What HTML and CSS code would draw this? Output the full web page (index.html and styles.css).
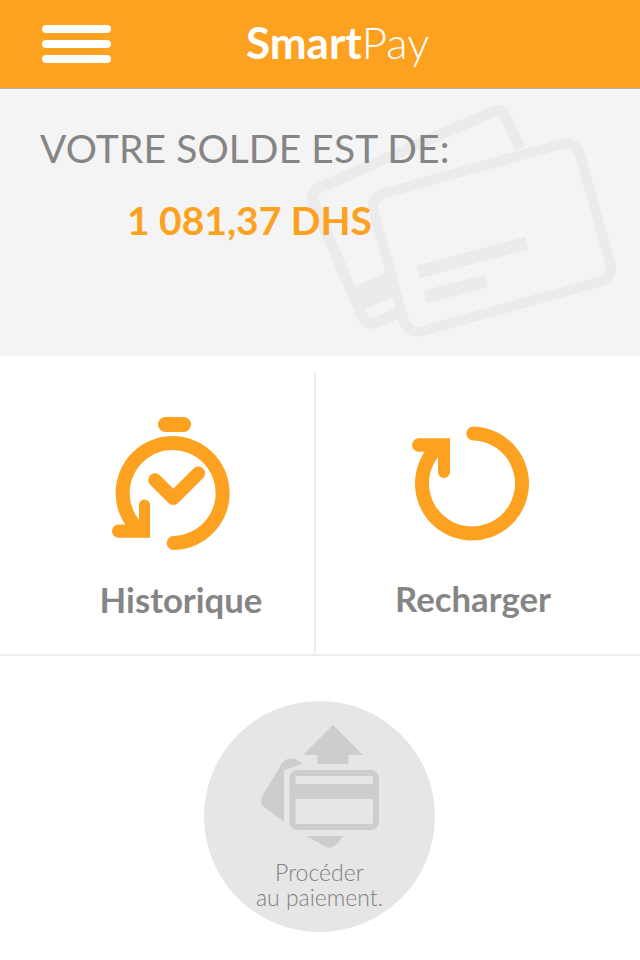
FILE: index.html
```html
<!DOCTYPE html>
<html lang="fr">
<head>
    <meta charset="UTF-8">
    <meta name="viewport" content="width=device-width, initial-scale=1.0">
    <title>SmartPay</title>
    <link rel="stylesheet" href="styles.css">
</head>
<body>
    <header class="topbar">
        <div class="burger"><span></span><span></span><span></span></div>
        <div class="brand"><b>Smart</b>Pay</div>
    </header>

    <section class="balance">
        <svg class="cards" width="330" height="250" viewBox="300 100 330 250">
            <path d="M520 149 L506 117 Q501.5 107.6 492 112 L320 187.5 Q309.5 192 313.5 202 L362 316 Q367 326.5 377.5 322 L400 312" fill="none" stroke="#ebebeb" stroke-width="11"/>
            <path d="M356 300 L400 280" stroke="#ebebeb" stroke-width="25"/>
            <rect x="385" y="166" width="214" height="143" rx="14" fill="#f4f4f4" stroke="#ebebeb" stroke-width="10" transform="rotate(-15.5 492 237.5)"/>
            <g stroke="#ebebeb" stroke-width="13">
                <path d="M418 272 L527 243"/>
                <path d="M425 297 L486 281"/>
            </g>
        </svg>
        <h2 class="balance-label">VOTRE SOLDE EST DE:</h2>
        <div class="balance-amount">1 081,37 DHS</div>
    </section>

    <div class="tiles">
        <div class="tile tile-left">
            <svg class="tile-icon" width="118" height="136" viewBox="112 415 118 136">
                <rect x="158" y="417" width="33" height="15" rx="7.5" fill="#fca120"/>
                <g fill="none" stroke="#fca120" stroke-linecap="round">
                    <path d="M173.7 543 A50 50 0 1 0 139 530" stroke-width="14"/>
                    <path d="M155 480 L173.3 498.3 L198.3 473.3" stroke-width="13.5" stroke-linejoin="round"/>
                </g>
                <path d="M118.7 524.4 H139 V505 a5.5 5.5 0 0 1 11 0 V537.8 H118.7 a6.7 6.7 0 0 1 0 -13.4 Z" fill="#fca120"/>
            </svg>
            <div class="tile-label">Historique</div>
        </div>
        <div class="tile tile-right">
            <svg class="tile-icon" width="118" height="116" viewBox="412 426 118 116">
                <path d="M473.3 433.5 A50 50 0 1 1 438.6 446.3" fill="none" stroke="#fca120" stroke-width="14" stroke-linecap="round"/>
                <path d="M418.7 438.3 H450 V472 a6 6 0 0 1 -12 0 V451.7 H418.7 a6.7 6.7 0 0 1 0 -13.4 Z" fill="#fca120"/>
            </svg>
            <div class="tile-label">Recharger</div>
        </div>
    </div>

    <div class="pay">
        <div class="pay-circle">
            <svg class="pay-icon" width="122" height="126" viewBox="259 724 122 126">
                <path d="M333 725 L363 755 H348.5 V764 H317.5 V755 H303 Z" fill="#cdcdcd"/>
                <path d="M284 770 L302 764 Q295 757 288 759 Q284 760 282 763 L262 797 Q259 803 264 807 L284 822 Z" fill="#cdcdcd"/>
                <path d="M306.5 836 H343.5 L336 845 Q331 849 326 847 Z" fill="#cdcdcd"/>
                <rect x="292.5" y="773" width="83.5" height="54" rx="5" fill="#e6e6e6" stroke="#cdcdcd" stroke-width="6"/>
                <rect x="292" y="784" width="84" height="15" fill="#cdcdcd"/>
            </svg>
            <div class="pay-text">Procéder<br>au paiement.</div>
        </div>
    </div>
</body>
</html>
```

FILE: styles.css
```css
body {
    margin: 0;
    background-color: #fff;
    font-family: Lato, "Open Sans", sans-serif;
}

.topbar {
    display: flex;
    align-items: center;
    height: 88px;
    padding-left: 42px;
    background-color: #fca120;
    border-bottom: 1px solid #b5b0a8;
}

.burger {
    display: flex;
    flex-direction: column;
    gap: 7px;
    width: 69px;
}

.burger span {
    height: 8px;
    background-color: #fff;
    border-radius: 4px;
}

.brand {
    margin: 0 0 5px 135px;
    color: #fff;
    font-size: 44px;
    font-weight: 300;
}

.brand b {
    font-weight: 700;
}

.balance {
    position: relative;
    height: 267px;
    padding: 36px 0 0 40px;
    box-sizing: border-box;
    background-color: #f4f4f4;
}

.cards {
    position: absolute;
    left: 300px;
    top: 11px;
}

.balance-label {
    position: relative;
    margin: 0;
    color: #858585;
    font-size: 39px;
    font-weight: 400;
    letter-spacing: 0.1px;
    line-height: 46px;
}

.balance-amount {
    position: relative;
    margin: 26px 0 0 87px;
    color: #fca120;
    font-size: 39px;
    font-weight: 700;
    line-height: 46px;
}

.tiles {
    display: flex;
    height: 300px;
    padding-top: 16px;
    box-sizing: border-box;
    border-bottom: 2px solid #eeeeee;
}

.tile {
    display: flex;
    flex-direction: column;
    align-items: center;
}

.tile-left {
    width: 316px;
    padding: 43px 0 0 48px;
    box-sizing: border-box;
    border-right: 2px solid #eeeeee;
}

.tile-right {
    flex: 1;
    padding: 54px 10px 0 0;
    box-sizing: border-box;
}

.tile-icon {
    display: block;
}

.tile-left .tile-icon {
    margin-right: 20px;
}

.tile-right .tile-icon {
    margin-right: 4px;
}

.tile-label {
    margin-top: 28px;
    color: #858585;
    font-size: 34.7px;
    font-weight: 700;
    line-height: 42px;
}

.tile-right .tile-label {
    margin-top: 36px;
}

.pay {
    display: flex;
    justify-content: center;
    padding: 45px 1px 0 0;
}

.pay-circle {
    display: flex;
    flex-direction: column;
    align-items: center;
    width: 231px;
    height: 231px;
    padding-top: 23px;
    box-sizing: border-box;
    background-color: #e6e6e6;
    border-radius: 50%;
}

.pay-icon {
    display: block;
}

.pay-text {
    margin-top: 10px;
    color: #808080;
    font-size: 23px;
    font-weight: 300;
    line-height: 25px;
    text-align: center;
}
```
